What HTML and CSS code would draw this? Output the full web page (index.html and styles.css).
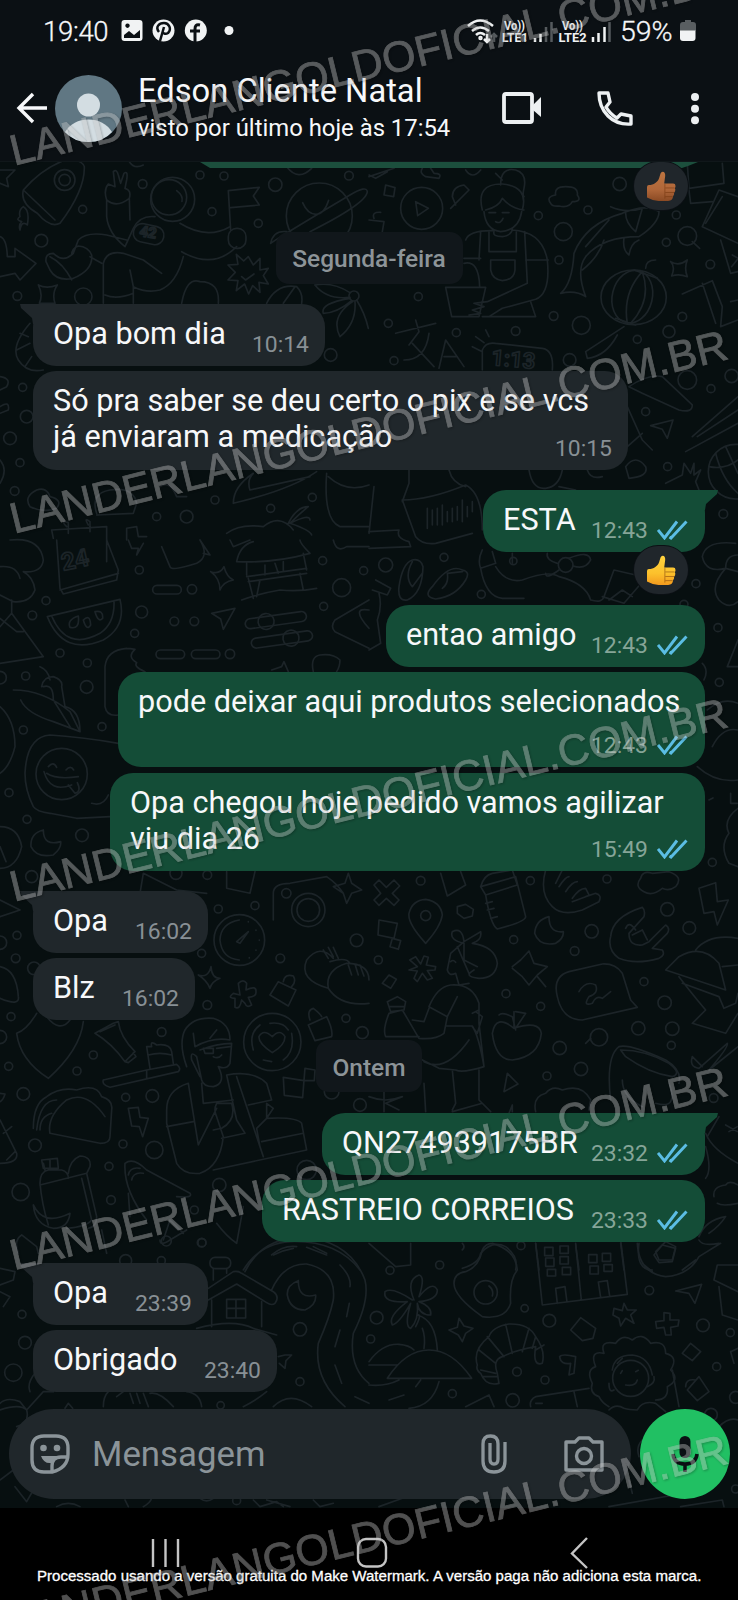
FILE: index.html
```html
<!DOCTYPE html>
<html lang="pt-BR">
<head>
<meta charset="utf-8">
<title>Edson Cliente Natal</title>
<link rel="stylesheet" href="styles.css">
</head>
<body>
<svg class="defs" width="0" height="0">
  <defs>
    <linearGradient id="yellow" x2="0" y2="1"><stop offset="0" stop-color="#ffd33f"/><stop offset=".6" stop-color="#fcc12c"/><stop offset="1" stop-color="#f39a1e"/></linearGradient>
    <linearGradient id="brown" x2="0" y2="1"><stop offset="0" stop-color="#bd7440"/><stop offset=".6" stop-color="#b0673a"/><stop offset="1" stop-color="#8b4a24"/></linearGradient>
    <symbol id="ticks" viewBox="0 0 31 20"><path d="M1 10l6.500 8L20 1.500M12.500 17l1.500 1L29.500 1.500" fill="none" stroke="#5bbde4" stroke-width="2.900"/></symbol>
    <symbol id="thumb" viewBox="0 0 30 31"><path d="M0 16Q0 14 2 14C7 14 11 11 12.500 7L14 2Q15-.5 17.500.5Q19.500 2 18.500 7L17.800 12.500H27Q29.500 12.500 29.500 15Q29.500 16.500 28.800 17.200Q29.800 18.500 29 20.500Q28.800 21.500 28 22Q28.500 24 27 25.500Q26.500 30 22 30.500H12Q5 30 0 27Z"/><path d="M19 17h9.500M19 21.700h9M19 26h7.500M18.500 13v15" fill="none" stroke="#6b2f08" stroke-opacity=".5" stroke-width="1"/></symbol>
  </defs>
</svg>
<div class="phone">
  <header class="top">
    <div class="status">
      <span class="clock">19:40</span>
      <svg class="notif" width="120" height="24" viewBox="0 0 120 24" fill="#f1f3f4">
        <path fill-rule="evenodd" d="M3.500 1h15a3 3 0 0 1 3 3v15a3 3 0 0 1-3 3h-15a3 3 0 0 1-3-3V4a3 3 0 0 1 3-3zM3 19v-3l5-4 5 4 6-5v8z M6.500 4.500a2.200 2.200 0 1 0 .01 0z"/>
        <circle cx="42.500" cy="11.500" r="11"/><path d="M38 13c-4-5 0-9 5-9s8 6 4 10c-3 2-5 0-5-1M43 8l-4 14" fill="none" stroke="#0b1014" stroke-width="2.500"/>
        <circle cx="74.800" cy="11.500" r="11"/><path d="M79 6c-4-1-5 1-5 4v13M69 12h10" fill="none" stroke="#0b1014" stroke-width="3"/>
        <circle cx="108" cy="11.500" r="4.500"/>
      </svg>
      <svg class="signals" width="150" height="28" viewBox="0 0 150 28" fill="none" stroke="#f1f3f4" stroke-width="2.500">
        <path d="M1 9Q13-2 26 9M5 14q8-7 17 0M9 18q4-4 9 0"/><circle cx="13.500" cy="21" r="1" /><path d="M20 17v8m-3-3l3 3 3-3"/><path d="M27 25v-8m-3 3l3-3 3 3" stroke="#555a5d"/>
        <g class="lte" stroke="none" fill="#f1f3f4"><text x="37" y="12.500" textLength="21" lengthAdjust="spacingAndGlyphs">Vo))</text><text x="35" y="25" textLength="26" lengthAdjust="spacingAndGlyphs">LTE1</text><text x="95" y="12.500" textLength="21" lengthAdjust="spacingAndGlyphs">Vo))</text><text x="91.500" y="25" textLength="28" lengthAdjust="spacingAndGlyphs">LTE2</text></g>
        <path d="M68 25v-4M73.500 25v-8M126 25v-5M131.500 25v-9M137.500 25V10"/><path d="M79 25V10M84.500 25V5M142.500 25V5" stroke="#555a5d"/>
      </svg>
      <span class="percent">59%</span>
      <svg class="battery" width="16" height="22" viewBox="0 0 16 22"><path d="M5 0h6v2h2q3 0 3 3v6H0V5q0-3 3-3h2z" fill="#595e61"/><path d="M0 10.500h15.500V18q0 3-3 3H3q-3 0-3-3z" fill="#f1f3f4"/></svg>
    </div>
    <div class="bar">
      <svg class="back" width="32" height="32" viewBox="0 0 32 32" fill="none" stroke="#f7f8fa" stroke-width="3.400"><path d="M31 16H3M17 2L3 16l14 14"/></svg>
      <svg class="avatar" width="67" height="67" viewBox="0 0 67 67"><circle cx="33.500" cy="33.500" r="33.500" fill="#607783"/><circle cx="33.500" cy="30" r="11.500" fill="#d3dde2"/><path d="M10 57q8-12.500 23.500-12.500T57 57Q48 67 33.500 67T10 57z" fill="#d3dde2"/></svg>
      <div class="who"><div class="name">Edson Cliente Natal</div><div class="seen">visto por último hoje às 17:54</div></div>
      <svg class="video" width="40" height="32" viewBox="0 0 40 32"><rect x="2" y="2" width="28" height="28" rx="2" fill="none" stroke="#edf0f2" stroke-width="3.800"/><path d="M31 13l8-8v20l-8-7z" fill="#edf0f2"/></svg>
      <svg class="call" width="36" height="36" viewBox="0 0 36 36" fill="none" stroke="#edf0f2" stroke-width="3.400" stroke-linejoin="round"><path d="M2 2h9l2 9-4 5q4 7 11 11l4-4 10 2v8Q20 34 11 25T2 2z"/></svg>
      <svg class="more" width="8" height="32" viewBox="0 0 8 32" fill="#edf0f2"><circle cx="4" cy="4" r="4"/><circle cx="4" cy="15.700" r="4"/><circle cx="4" cy="27.300" r="4"/></svg>
    </div>
  </header>

  <main class="chat">
    <svg class="doodles" width="738" height="1346" viewBox="0 162 738 1346">
      <!-- rocket, astronaut, planet -->
      <g transform="translate(0 160) scale(.3333)">
        <path d="M70 90Q130 20 210-5Q250 5 253 20Q255 90 180 190Q150 205 112 160Q60 130 70 90L165 180M70 140Q90 150 82 195Q65 180 60 210Q55 195 65 185Q45 180 60 170Q55 150 70 140"/>
        <circle cx="194" cy="60" r="31"/><circle cx="194" cy="60" r="17"/>
        <circle cx="518" cy="118" r="66"/><circle cx="507" cy="112" r="53"/><path d="M530 92q20 15 16 32"/>
        <path d="M320 120Q310 90 325 72L345 80L340 35Q350 25 355 45L362 70L372 40Q385 30 380 60L375 85Q395 90 388 115Q350 145 320 120V170Q325 220 375 260L400 205Q420 165 465 170M388 115L390 180M380 240L320 225Q260 215 235 240L220 280M540 190Q620 240 690 200M545 275Q640 330 710 260M550 290Q530 370 480 390Q440 400 400 380L390 330M310 430V310Q320 270 370 280L430 300L485 340M400 430V380M315 405Q350 420 400 400M220 280Q190 310 160 280Q135 280 138 305L150 330Q170 365 220 355Q280 330 275 285Q265 260 235 258Q215 265 215 285M150 290Q190 310 215 360M270 290L305 310"/>
        <rect x="400" y="195" width="92" height="55" rx="26" transform="rotate(12 446 222)"/><text x="418" y="232" font-size="44" transform="rotate(10 446 222)">42</text>
        <path d="M692 210L685 92L778 82L760 108L778 135L692 143"/><rect x="685" y="205" width="53" height="60" rx="25"/>
        <circle cx="958" cy="168" r="99"/><path d="M908 128q15 35 40 35t38-42M812 250Q840 230 1050 105Q1100 75 1102 95Q1100 130 930 215M812 250Q820 210 860 215"/>
        <path d="M745 290l15 25 20-20 0 35 25-5-15 22 15 25-28-5 3 30-22-20-12 25-12-30-25 20 5-30-30-2 22-23-22-22 30-2-5-30 22 20zM725 350l12 10 25-18"/>
        <path d="M0 30L45 30L20 55L25 80L0 70M0 230Q20 235 22 290H45V265L108 310L60 360L45 340L0 350M115 375Q140 388 172 375Q155 400 165 430H118Q130 405 115 375M545 430Q560 350 600 365Q660 365 655 430M800 430Q830 370 890 380Q910 400 905 430M850 430L885 380M90 490Q30 560 55 600Q80 640 130 630M60 520L85 530M50 570L90 550M75 620L95 590"/>
        <circle cx="1062" cy="408" r="15"/><path d="M945 375Q1000 365 1050 398M945 375Q980 420 1050 412M970 460Q960 430 1050 415M970 460Q1010 460 1055 422M1020 530Q990 470 1058 425M1020 530Q1070 490 1065 425M1105 505Q1095 460 1070 420M700 1030Q700 980 760 940Q740 960 750 990L930 950M700 1030Q870 990 950 935M980 940Q970 1080 1020 1100H1107M985 950Q1040 1000 1107 975M680 1120Q720 1090 790 1100Q840 1060 880 1110M865 1090Q890 1040 925 1040Q900 1060 870 1090M870 1090Q930 1060 930 1080M870 1090Q930 1110 935 1125M90 1040Q70 1010 110 990Q140 980 150 1010Q190 1020 170 1045Q130 1060 90 1040M290 1060Q270 1000 330 990Q400 980 410 1030L400 1060L290 1065M160 1135L155 1110L320 1100L320 1140M200 1100Q180 1080 205 1088V1120M265 1095Q250 1070 270 1085V1115M380 1140L380 1105L410 1100L415 1130L440 1130M480 980Q510 960 530 1010L560 1010M0 650Q35 655 20 680L0 690M0 740Q30 720 25 750L0 760M0 900Q25 930 0 970"/>
        <circle cx="124" cy="242" r="19"/><circle cx="250" cy="410" r="26"/><circle cx="248" cy="148" r="12"/><circle cx="428" cy="72" r="13"/><circle cx="600" cy="45" r="12"/><circle cx="672" cy="48" r="12"/><circle cx="636" cy="155" r="12"/><circle cx="775" cy="190" r="12"/><circle cx="826" cy="74" r="20"/><circle cx="1047" cy="47" r="13"/><circle cx="52" cy="408" r="13"/><circle cx="68" cy="682" r="12"/><circle cx="80" cy="770" r="19"/><circle cx="30" cy="835" r="19"/><circle cx="60" cy="908" r="12"/><circle cx="44" cy="993" r="13"/><circle cx="470" cy="1070" r="12"/><circle cx="560" cy="1070" r="19"/><circle cx="645" cy="1020" r="12"/><circle cx="812" cy="1045" r="12"/><circle cx="937" cy="1012" r="12"/><circle cx="992" cy="585" r="19"/><path d="M860 20Q895 65 935 25M385 0Q400 30 430 15"/>
      </g>
      <!-- gardener, koi, lantern -->
      <g transform="translate(369 160) scale(.3333)">
        <circle cx="158" cy="145" r="63"/><path d="M140 125l38 20-32 22zM340 150Q320 70 400 72Q480 80 460 150M350 150Q390 140 400 115Q425 145 465 150M345 155Q350 210 395 215Q450 210 458 155M360 158h20M400 158h20M380 185q15 8 22-10M395 75Q395 20 440 30Q475 40 465 85Q460 105 465 110M380 40L400 60M375 215Q370 230 400 230Q430 225 430 205M290 240Q300 210 375 212M430 210Q520 215 535 300Q545 400 500 418L400 445L360 470M335 215L330 300M285 295H335M285 310Q330 300 332 380M360 215V275H442V215M467 215L475 370L355 425L315 430L345 440L310 450L335 460L300 465M365 300H438V330Q435 360 400 362Q370 358 365 330ZM470 300H538M230 382H350L330 470H248ZM340 470H500L485 425M0 50L75 25M0 45L20 55L55 35M160 25Q150 40 170 50L210 55Q220 40 195 40L185 25M290 30Q310 60 335 30M245 145L300 90L285 75Q250 80 250 110L260 135M45 105l5-30 28 8-4 27zM0 180L45 185L40 215M15 175q-8-20 20-18"/>
        <path d="M545 130Q530 110 560 105Q555 80 590 80Q630 80 625 105Q640 125 610 125Q600 145 570 138Q550 140 545 130M575 400Q610 370 615 280Q650 190 760 160Q830 130 870 155Q870 190 810 230Q700 230 650 290Q620 330 650 410Q620 390 575 400M725 140Q770 160 820 145L800 215Q770 190 770 160M640 330Q690 290 705 240M650 260L720 180M765 235Q760 270 780 285Q785 250 810 240"/>
        <ellipse cx="794" cy="412" rx="98" ry="82"/><ellipse cx="790" cy="410" rx="60" ry="80" transform="rotate(14 790 410)"/><path d="M820 335Q760 400 775 490M820 335Q850 420 785 490M795 330L865 355M830 325Q830 300 860 300M740 475L800 495M765 500L650 575L655 595Q710 590 745 525M905 305Q930 320 955 300Q945 325 955 350Q930 340 908 348Q920 320 905 305M940 402L1030 362L1060 440L1055 500L1107 480M1000 370L1040 490M1085 425L1107 420M80 520L200 490M140 480L150 515L120 555M105 600Q170 600 180 520M130 550L195 620M210 625L230 540L285 620M225 590L265 590M340 630L340 570Q350 545 380 550L520 565Q555 570 550 630M310 560L340 575M350 510L360 530M320 530L345 548"/>
        <text x="365" y="615" font-size="66" transform="rotate(5 365 615)">1:13</text>
        <circle cx="955" cy="228" r="28"/><path d="M970 245L992 265M1000 200L1050 90L1107 110M1000 200L1107 250M1010 190L1060 110M1055 240L1085 340L1107 335M1090 285l18 10-20 25M955 10L960 85L1065 70L1060 10M960 90L965 130L1030 125M780 680Q840 640 880 650L970 735Q970 760 930 750L820 700ZM845 797L912 780L895 835L880 808ZM970 830L1107 710M985 830L1107 750M950 875L1107 790M770 920Q800 880 830 920Q840 950 780 955ZM890 970L940 945L945 910L965 940L975 910L975 945L995 930L980 965L990 990M100 1020Q180 1020 290 975Q340 1000 340 1110M775 740L820 840L850 870M775 860L820 820M120 930V970L100 1025M0 1120L15 980M240 930Q250 970 290 980M480 930Q490 990 530 985Q570 980 580 930M655 930Q665 960 700 950M570 980L620 990"/>
        <path d="M175 1045v60M190 1050v45M205 1045v50M220 1035v60M235 1055v30M250 1045v40M265 1040v40M280 1020v65M295 1040v30M310 1025v30"/>
        <circle cx="1100" cy="935" r="82"/><path d="M1020 920Q1070 930 1107 900M1040 880Q1060 960 1107 1000M1070 860L1107 940"/>
        <circle cx="752" cy="72" r="20"/><circle cx="657" cy="150" r="12"/><circle cx="508" cy="167" r="12"/><circle cx="583" cy="215" r="27"/><circle cx="570" cy="300" r="12"/><circle cx="554" cy="468" r="13"/><circle cx="637" cy="496" r="27"/><circle cx="148" cy="410" r="12"/><circle cx="58" cy="490" r="12"/><circle cx="262" cy="518" r="12"/><circle cx="440" cy="513" r="13"/><circle cx="75" cy="602" r="12"/><circle cx="602" cy="600" r="19"/><circle cx="892" cy="247" r="12"/><circle cx="922" cy="165" r="12"/><circle cx="1024" cy="313" r="13"/><circle cx="940" cy="470" r="13"/><circle cx="900" cy="515" r="18"/><circle cx="805" cy="538" r="12"/><circle cx="830" cy="755" r="12"/><circle cx="955" cy="660" r="28"/><circle cx="1026" cy="686" r="12"/><circle cx="1088" cy="648" r="20"/><circle cx="896" cy="920" r="12"/><circle cx="1063" cy="1062" r="13"/>
      </g>
      <!-- sandals, flower -->
      <g transform="translate(369 480) scale(.3333)">
        <path d="M100 60L140 170Q160 195 200 190L310 160M0 155L90 150Q80 175 120 185L125 200L0 205M130 240Q100 250 90 320Q85 365 115 360Q160 340 162 260Q155 235 130 240M130 245Q105 290 130 320L160 280M280 270Q240 250 190 320Q160 350 200 357Q260 350 290 300Q305 275 280 270M280 275L235 280Q240 310 220 325M20 300L65 325L55 345L10 330M30 340Q40 380 25 420L35 490L0 510M340 210Q325 240 335 265L380 250L370 215M335 265Q350 350 400 355H465M380 260Q410 310 460 300Q540 270 570 290Q650 310 665 360Q700 370 705 350L735 270L800 285M700 350L765 370L825 300M720 360L760 330L790 350M430 220V250"/>
        <circle cx="590" cy="255" r="22"/><path d="M565 250Q530 240 535 220M600 235Q660 210 665 240Q650 270 612 258M570 270Q530 300 530 280"/>
        <circle cx="50" cy="255" r="21"/><circle cx="225" cy="232" r="12"/><circle cx="337" cy="343" r="12"/><circle cx="433" cy="243" r="11"/><circle cx="981" cy="311" r="12"/><path d="M1100 190Q1010 180 1000 230Q1010 280 1070 265Q1020 320 1050 360Q1080 390 1107 365M1107 225Q1070 225 1070 265L1107 275M1075 560L1107 480M1075 560H1107M1000 550Q1020 570 1005 600M985 860Q1040 910 1107 900M1030 800Q1060 740 1107 750M1015 690Q1060 650 1107 670M1020 960l12-6M1085 940v30h20M1107 985Q1060 1020 1080 1060Q1050 1100 1080 1150L1107 1160"/>
        <circle cx="1047" cy="443" r="12"/><circle cx="1051" cy="607" r="12"/><circle cx="1030" cy="1147" r="12"/><circle cx="945" cy="373" r="12"/>
      </g>
      <!-- calendar, watermelon, chillies, badge -->
      <g transform="translate(0 540) scale(.3333)">
        <path d="M170 0L180 145L190 162L350 120L355 90L320 0M180 150L355 100M320 0V65M30 0Q120-10 130 60Q125 100 70 95Q100 110 105 150Q90 190 40 185L0 165M60 115Q50 75 0 80M35 180V220L130 350L0 370M35 220L0 260M0 235L50 275H70M142 230L360 178Q380 260 310 300Q190 350 142 230M155 228Q200 335 300 280Q345 250 342 182M235 228Q200 240 210 262Q240 270 235 228M250 240Q270 220 272 255Q260 275 250 240M285 215Q310 210 308 235Q295 250 285 215M385 0L395 25H415L410 45L430 10M485 20L510 80Q515 95 590 70Q630 50 600 0M600 0L630 45L610 40M690 0L700 20L750 0M632 95Q660 105 672 80Q680 110 700 120Q670 125 660 150Q660 115 632 95M710 65Q720 15 760 5M710 65Q820 70 930 40Q900 10 900 0M740 70V105M740 110L920 85M745 125L920 100M745 115L760 175M780 120L770 170M900 100L910 150M725 180Q780 160 840 150Q900 155 950 145M795 75V105M825 70L835 100M850 65V95M910 40L920 90M40 450Q130 450 210 515L240 575L160 545Q80 520 62 480M125 440Q130 410 160 410Q190 420 185 440L195 500Q240 510 240 575M130 440Q160 430 160 480L210 560M120 380Q145 390 150 420M380 325Q390 325 405 328Q380 350 410 368Q400 380 435 395M380 325Q320 330 315 380V500Q320 530 355 525M355 610Q240 590 150 585Q80 590 75 700Q75 750 100 800Q110 815 150 820L230 835L330 830M275 790Q310 800 325 765"/>
        <text x="190" y="92" font-size="72" transform="rotate(-12 190 92)">24</text>
        <circle cx="185" cy="702" r="77"/><path d="M132 695Q150 760 215 735M145 680q15-18 25 2M198 690q14-16 23 0M205 735L225 760Q245 755 232 728M140 700Q170 720 235 710"/>
        <rect x="458" y="136" width="86" height="26" rx="13"/><circle cx="576" cy="148" r="14"/><rect x="468" y="330" width="86" height="26" rx="13"/><rect x="574" y="330" width="86" height="26" rx="13"/><circle cx="690" cy="342" r="14"/><g transform="rotate(-8 830 240)"><rect x="735" y="225" width="185" height="30" rx="15"/><circle cx="798" cy="240" r="24"/><rect x="745" y="285" width="185" height="30" rx="15"/><circle cx="865" cy="300" r="24"/></g>
        <path d="M635 220L705 205L670 268L662 237ZM1107 180L1005 240Q990 260 1005 275L1107 325M1107 210Q1050 200 1107 265M815 390L845 380L852 365L865 395M940 395Q930 350 960 345Q1000 340 1020 360Q1020 380 1010 395M1000 0Q1010 40 1040 20L1107 20M0 500Q45 540 45 620Q30 680 0 700M0 500M0 860Q55 860 65 920Q50 985 0 985M0 920L18 965M130 870Q90 880 93 920Q110 955 160 945Q185 925 182 905Q130 920 130 870M420 1060L430 1000L530 1050L620 1060M680 995V1045L750 1060L765 995M820 1140V1060Q820 1030 870 1030L980 1010Q1010 1030 1030 1060M1000 1040L1035 1030L1045 1000L1055 1030L1085 1050L1055 1060L1040 1090L1030 1060ZM60 1110L0 1130M0 1080L60 1110"/>
        <circle cx="925" cy="1110" r="50"/><circle cx="925" cy="1110" r="34"/><circle cx="859" cy="1060" r="14"/><circle cx="418" cy="90" r="12"/><circle cx="138" cy="182" r="12"/><circle cx="97" cy="226" r="13"/><circle cx="425" cy="216" r="18"/><circle cx="523" cy="244" r="13"/><circle cx="583" cy="244" r="13"/><circle cx="404" cy="280" r="12"/><circle cx="180" cy="339" r="12"/><circle cx="262" cy="369" r="12"/><circle cx="260" cy="441" r="19"/><circle cx="77" cy="408" r="12"/><circle cx="0" cy="413" r="19"/><circle cx="306" cy="560" r="12"/><circle cx="70" cy="570" r="12"/><circle cx="27" cy="758" r="12"/><circle cx="81" cy="838" r="12"/><circle cx="246" cy="886" r="19"/><circle cx="95" cy="1010" r="18"/><circle cx="968" cy="62" r="12"/><circle cx="1025" cy="143" r="27"/><circle cx="971" cy="199" r="12"/><circle cx="1091" cy="92" r="12"/><circle cx="655" cy="1107" r="12"/><circle cx="765" cy="1097" r="12"/><circle cx="622" cy="1005" r="13"/><circle cx="528" cy="1000" r="18"/>
      </g>
      <!-- compass, skater, taco, grocery bag -->
      <g transform="translate(0 870) scale(.3333)">
        <circle cx="718" cy="210" r="76"/><path d="M718 270Q665 265 660 210Q662 160 718 150M710 215L745 185L720 220ZM745 155v1M768 180v1M778 210v1M768 240v1M748 263v1"/>
        <path d="M1000 265Q960 220 920 270Q895 330 985 355M990 275Q1040 260 1050 280M985 355Q975 300 1040 280Q1107 280 1107 330M985 355Q1020 410 1107 400M970 240L985 265M985 232L1000 260M1000 232L1015 265M1045 285L1055 315M1065 282L1075 315M1080 285L1092 318"/>
        <path d="M595 315Q625 325 633 290Q635 325 660 325Q635 335 630 355Q620 330 595 315M700 370L720 375L715 340Q730 325 740 340L738 360Q770 345 768 365Q770 380 745 382L755 405Q740 415 735 400L725 390Q720 420 705 412V385Q680 385 700 370M810 375L835 335L888 360L865 408ZM850 335Q855 310 880 318Q890 335 875 350M925 465L980 440Q1000 480 995 500L945 512ZM930 450Q920 420 940 415Q960 430 965 440"/>
        <circle cx="817" cy="516" r="86"/><path d="M817 548Q775 520 777 500Q790 475 817 500Q840 475 855 500Q855 525 817 548M760 540Q745 490 780 465M875 490Q885 545 850 570M790 570L815 575M810 460Q850 455 865 480"/>
        <path d="M560 590Q535 520 555 480Q580 440 640 445Q690 460 690 510Q640 500 585 530L580 490M650 480L630 505M600 540Q650 520 695 520L690 580Q680 600 655 590Q680 640 640 650Q610 650 605 630L590 560Q570 540 575 570L600 620M610 535H640L640 550H615ZM650 535L690 530M640 560q15 8 25-5M565 640Q500 660 500 720V760L530 880Q550 915 600 910Q660 890 670 800L650 740Q640 720 650 700H695Q710 750 665 775L640 780M500 770L580 755M565 640L595 825L650 715M605 640L610 700L700 690M680 615L710 750L735 790L665 805M680 615Q760 600 800 640L815 690L745 705M710 620L790 860M640 900L920 840L905 760Q890 740 800 745L820 715L800 700V745L770 775L780 830M785 815L910 790M640 550"/>
        <path d="M50 490Q80 480 110 430M50 490Q60 570 145 625Q240 540 250 455M140 440Q180 490 210 450M285 490L340 460L355 455Q360 500 405 545L375 575Q335 520 285 490M300 485L345 465M375 575L385 578L408 560L400 548M310 630L440 600L530 583Q545 595 535 605L330 652Q305 645 310 630M440 600V625M450 595L440 530H455Q450 510 470 525Q510 520 515 545L520 580M445 555Q480 545 515 555M0 290Q50 300 55 380Q60 410 0 385M0 670L15 672Q10 690 0 695M100 775Q100 700 140 680Q180 650 230 660Q290 640 305 680Q340 690 335 720L330 800Q330 820 300 820L150 790Q140 740 200 690Q260 660 315 740M110 780Q120 690 170 690M120 780Q120 740 155 730M385 715L415 712L420 742L445 745L428 800L418 770L395 768ZM0 750L50 850Q55 880 0 880M10 790L35 770M20 870L45 845"/>
        <path d="M145 1065Q125 1000 120 940Q120 905 145 900H185Q205 905 205 925M135 900L130 880M125 870L130 895H175L172 865ZM150 868V895M120 945L260 910L270 890Q275 860 240 858Q210 870 205 910M245 925L275 1050Q260 1070 200 1075M260 910L290 1040Q290 1070 265 1075M100 1005Q130 1070 210 1030Q205 1075 160 1075Q105 1065 100 1005M375 880Q400 860 440 900L570 970Q580 985 530 980M375 880Q370 960 440 1050M385 915Q390 890 420 895M395 930Q400 905 430 910M385 970L390 1040M490 1110L510 1050L550 1090M480 1110Q480 1130 510 1110L560 1080M650 1060Q680 1100 710 1120L730 1010M55 1150Q40 1110 65 1095L110 1130L115 1150M305 1080L320 1150M730 1200Q780 1120 870 1115Q1010 1110 1080 1200M815 1155Q850 1125 890 1130M940 1130L980 1150"/>
        <path d="M850 622L912 632L908 683L853 676ZM912 632L915 595L945 600L943 632Z"/>
        <circle cx="841" cy="265" r="13"/><circle cx="1070" cy="211" r="19"/><circle cx="1038" cy="445" r="12"/><circle cx="1087" cy="488" r="18"/><circle cx="605" cy="250" r="12"/><circle cx="622" cy="405" r="13"/><circle cx="47" cy="265" r="13"/><circle cx="102" cy="295" r="19"/><circle cx="51" cy="196" r="12"/><circle cx="0" cy="218" r="20"/><circle cx="33" cy="440" r="12"/><circle cx="0" cy="501" r="20"/><circle cx="26" cy="589" r="12"/><circle cx="231" cy="603" r="12"/><circle cx="280" cy="555" r="12"/><circle cx="485" cy="486" r="13"/><circle cx="70" cy="672" r="19"/><circle cx="377" cy="682" r="12"/><circle cx="457" cy="678" r="19"/><circle cx="105" cy="826" r="19"/><circle cx="369" cy="822" r="12"/><circle cx="463" cy="840" r="26"/><circle cx="327" cy="889" r="12"/><circle cx="62" cy="966" r="26"/><circle cx="333" cy="990" r="13"/><circle cx="658" cy="945" r="20"/><circle cx="583" cy="1020" r="12"/><circle cx="605" cy="1118" r="13"/><circle cx="920" cy="900" r="29"/><circle cx="995" cy="665" r="22"/><circle cx="1080" cy="705" r="19"/>
      </g>
      <!-- bottle, pin, reader, apple, cup -->
      <g transform="translate(369 870) scale(.3333)">
        <path d="M15 45L30 30L52 52L75 30L92 48L70 70L90 90L75 106L52 85L30 106L15 90L35 70ZM170 220Q115 160 120 130Q130 90 170 88Q215 95 220 135Q215 170 170 220M30 150L85 160L75 205L27 195ZM70 205L95 212L88 238L63 230ZM215 10L235 78L290 45L275 5M265 110L290 103L313 118L310 138L285 145L265 130ZM335 50L440 20L470 140Q470 155 385 177Q365 165 350 75M335 50Q345 15 370 10L430 0L445 45L350 75ZM350 100L370 95M355 120L375 115M365 145L385 140M530 0Q510 70 550 110Q580 140 640 120L690 95Q700 75 680 70L650 80L610 95M560 40L580 0M570 50Q590 20 600 20M590 65Q610 35 625 35M610 85Q630 55 650 55L660 75M825 65Q795 50 815 25Q820 0 850 10L900 5Q945 20 920 50Q900 65 880 55Q850 80 825 65M990 55L1040 38L1045 95L1078 90L1045 165L1035 125L1005 130ZM540 140Q500 150 497 190Q510 230 560 220Q585 205 583 185Q540 190 540 140M820 112Q830 120 825 140L780 190Q780 230 820 225L840 215L890 165Q905 175 895 190L850 235L880 240Q890 255 870 265Q800 285 750 265Q715 240 725 200Q730 140 820 112M770 175Q780 150 800 180M790 195L820 180L835 210"/>
        <path d="M430 290L455 270L480 243L495 280L535 290L505 315L480 345L460 320L430 295M505 320L530 350M120 300L145 290L122 270L140 260L155 282L165 258L178 262L172 285L200 290L198 300L175 302L190 325L175 330L160 310L145 335L135 325L145 303ZM40 340L60 315L82 328L65 355ZM250 185Q280 170 285 215L335 185Q340 210 310 220Q380 230 385 280Q380 325 330 325Q280 320 315 300M285 215L245 250L235 300Q240 320 260 310L270 345L300 340M250 185Q240 210 285 220M285 220L285 270L325 290M265 230L300 310M245 275q8-8 15 2M180 410Q205 350 245 345Q310 340 330 400V460L345 590Q280 610 260 600L210 595L160 570M180 410L235 440L265 380M235 440L225 490Q200 510 150 505L100 420L60 430Q40 480 50 500H150M180 415L165 455L130 450M55 395L85 380L110 395L105 420L65 425ZM60 410H105M230 468H310Q330 500 345 590M310 430L330 420M310 470L325 490L340 440L320 425M165 575Q230 610 300 510M250 600L260 700L250 720M330 600L330 690L365 725M250 725L340 700M165 640L170 725M0 680Q50 700 100 680L50 700L90 720M45 640V725M435 475Q380 430 370 490Q380 570 430 570Q510 560 517 490Q510 450 435 475V425M390 435Q400 425 430 440L440 480M440 425L470 430L440 475"/>
        <path d="M565 380Q550 320 600 305L700 282Q740 280 760 310L785 390L805 412L640 450Q580 450 565 380M630 365Q650 330 680 345Q690 370 660 380Q640 410 670 400Q680 375 700 385L725 365M890 300L930 260Q1000 220 1050 280L1070 360L1010 340ZM930 320Q960 360 1010 420L970 460L1070 490L1107 430M940 340L1050 380L1065 415L1100 400L1107 370M980 240Q1020 190 1107 205M1060 290L1107 285M755 540Q830 540 900 580Q940 610 910 620Q840 610 770 560Z"/>
        <path d="M725 690Q710 560 750 530Q780 520 890 570Q940 600 930 640M760 630Q760 680 820 710M860 700Q930 720 900 640M970 560Q960 590 990 595L1075 520Q1080 530 1020 600L1107 530M970 560L1000 590M405 665L415 610L447 642ZM500 725Q490 680 530 670Q550 645 580 660Q640 640 665 690L660 720M420 730L430 705V725M650 520L665 505M1010 790Q1030 840 1107 880M1050 740L1015 800M1070 765l35 20M1080 785l25-15M1010 830Q1030 900 1010 925M1035 980Q1030 950 1070 945Q1080 930 1107 945M1045 1000Q1060 1010 1107 1000M990 1100Q1010 1050 1070 1040Q1050 1070 1020 1090M0 1120L80 1190L125 1185V1120M280 1120Q290 1130 280 1140M280 1195Q330 1180 335 1150Q370 1110 410 1130Q450 1160 440 1200M500 1120L510 1200M620 1125L630 1200M755 1120L765 1200M810 1120Q800 1200 850 1200M860 1145L890 1115L920 1130L910 1170L870 1170Z"/>
        <circle cx="170" cy="137" r="15"/><circle cx="690" cy="502" r="26"/><circle cx="155" cy="32" r="13"/><circle cx="484" cy="32" r="12"/><circle cx="714" cy="27" r="12"/><circle cx="895" cy="118" r="20"/><circle cx="961" cy="174" r="19"/><circle cx="668" cy="184" r="20"/><circle cx="617" cy="243" r="13"/><circle cx="434" cy="209" r="12"/><circle cx="28" cy="270" r="12"/><circle cx="411" cy="371" r="12"/><circle cx="515" cy="409" r="12"/><circle cx="825" cy="335" r="12"/><circle cx="887" cy="398" r="20"/><circle cx="808" cy="475" r="20"/><circle cx="910" cy="476" r="20"/><circle cx="907" cy="526" r="12"/><circle cx="572" cy="534" r="20"/><circle cx="636" cy="597" r="20"/><circle cx="534" cy="618" r="12"/><circle cx="1034" cy="684" r="13"/>
      </g>
      <!-- house, road, palm, egg, croissant, portrait -->
      <g transform="translate(0 1240) scale(.3333)">
        <rect x="630" y="52" width="62" height="34" rx="15"/><path d="M640 86V120M680 86V100M625 145L700 95Q715 92 725 100L820 155Q840 170 825 190Q815 198 800 188L710 132L625 180M635 180V260M785 185V260M680 178H737V234H680ZM708 178V234M680 205H737M590 265Q700 235 760 265L830 285M735 95Q780 0 900-10Q1050 0 1095 120Q1110 180 1060 280Q1045 380 1107 430M815 150Q850 70 920 72Q1010 90 1000 180Q990 230 955 310Q940 420 1035 500M820 45Q850 30 880 25M920 22L980 45M1020 75Q1055 110 1050 140M1048 190L1040 230M1020 270L1005 320M1005 375L1025 430M1065 470L1107 490M895 122Q860 135 862 165Q870 210 915 210Q950 195 947 165Q895 180 895 122M835 350L855 345L875 345L858 362L855 385L838 370M90 455Q80 430 105 400M0 510Q60 490 80 510L130 455H160M0 490Q20 470 60 485L80 510Q90 550 50 560M310 500Q310 470 325 455M370 455L350 470M390 460L400 490M410 460L420 490M430 460L445 500M450 460Q480 455 520 500M560 455Q600 460 605 500M195 505L205 490L218 505M730 500Q770 480 800 455M820 500Q870 450 935 500M0 720L40 690M45 740L80 785L100 750M375 780L385 800M430 800Q450 790 455 775M600 775Q620 790 640 775M760 780L780 800L830 785L850 800M800 780L870 800M170 800Q205 780 240 800M940 780L960 800L1000 790M0 85L45 95L40 120L0 135M0 155L30 170L10 200"/>
        <circle cx="66" cy="223" r="12"/><circle cx="75" cy="308" r="19"/><circle cx="40" cy="398" r="26"/><circle cx="900" cy="268" r="20"/><circle cx="900" cy="425" r="12"/><circle cx="662" cy="496" r="11"/><circle cx="606" cy="8" r="12"/><circle cx="499" cy="3" r="15"/><circle cx="377" cy="62" r="18"/><circle cx="484" cy="62" r="12"/><circle cx="710" cy="782" r="12"/>
      </g>
      <g transform="translate(369 1240) scale(.3333)">
        <path d="M135 180Q110 120 150 105Q170 110 150 170Q190 120 205 150Q205 180 150 185Q190 200 185 225Q150 225 145 190Q150 240 125 265Q105 260 125 190Q90 250 70 255Q55 230 115 185Q40 190 48 155Q70 140 130 180M140 260Q160 220 145 225Q200 240 205 330M160 265Q170 290 165 325M55 415Q110 330 180 330Q250 330 308 415ZM0 375H85M0 365Q40 310 90 313Q120 315 135 330M0 435Q50 440 90 420M60 480L105 465M140 440L155 420M120 505Q190 500 210 425M240 270L265 262L270 235L285 258L312 265L290 280L280 305L268 285Z"/>
        <path d="M370 10Q440 30 445 90Q420 120 425 190Q410 240 340 230Q255 170 255 130Q255 100 290 95Q330 80 340 30Q350 10 370 10"/><circle cx="350" cy="157" r="35"/><path d="M360 138q15 12 10 30M500 10L520 195L775 163L755 0M620 10L637 180M565 190L560 145L588 140L594 186M695 172L688 126L715 122L722 168"/>
        <path d="M527 22h25v25h-25zM530 54h25v25h-25zM535 88h25v20h-25zM573 18h25v22h-25zM573 50h25v22h-25zM580 82h25v22h-25zM659 44h25v24h-25zM663 78h25v24h-25zM700 40h25v24h-25zM705 74h25v20h-25z"/>
        <path d="M805 10Q810 100 890 110Q960 105 990 50L1055 10M990 0Q1000 20 1050 10M855 45L880 15L920 25L910 65L870 68ZM820 70L850 95M940 90L980 60M920 153L998 133L978 190L960 160ZM1045 75L1107 75M1045 75L1035 120L1107 155M1050 140L1060 225L1107 240M605 270L635 233L680 265L672 295L640 302ZM735 205L760 212L765 190L775 210L802 210L785 225L795 250L770 235L755 258L750 235L732 225ZM860 245L885 242L885 218L903 220L903 240L930 240L927 258L905 262L907 285H890L885 262L863 265ZM940 340L965 310L995 335L970 362ZM1085 335L1107 325M1085 335L1095 370M955 450L990 410L1020 455L985 482ZM950 440Q950 415 980 420"/>
        <path d="M325 375Q310 330 360 290Q370 260 420 252Q480 250 500 290Q530 330 520 370Q490 380 500 320Q440 330 400 350Q370 360 385 400L390 430Q350 440 335 400Q320 390 325 375M330 330L380 370M355 290L405 350M410 253L430 340M480 265L460 335M500 290L490 325M500 330L525 315M335 390L380 400M340 410L385 410M572 350Q575 375 605 370L600 405L615 400L620 350Q580 340 572 350M290 500L360 465L375 500M485 500Q480 480 500 470L660 445M615 455L625 500M500 490L520 490M720 510Q740 490 765 505Q780 510 805 510Q820 480 860 490L890 515M910 390L930 500"/>
        <circle cx="785" cy="415" r="54"/><path d="M730 390Q735 345 790 345Q840 350 850 405M735 450Q720 460 720 430M835 440Q860 430 855 410M690 470Q660 460 670 430Q650 390 680 380Q660 330 705 340Q690 300 740 310Q760 280 790 300Q820 275 845 310Q890 300 890 340Q930 350 905 390Q935 420 895 440Q900 480 860 480M690 470Q700 490 720 500M770 435Q800 440 805 420M755 400l5-8M800 395l8-4M745 370L760 355"/>
        <circle cx="212" cy="75" r="12"/><circle cx="63" cy="91" r="12"/><circle cx="456" cy="17" r="12"/><circle cx="467" cy="205" r="11"/><circle cx="541" cy="242" r="19"/><circle cx="23" cy="233" r="19"/><circle cx="5" cy="297" r="12"/><circle cx="444" cy="395" r="13"/><circle cx="528" cy="420" r="12"/><circle cx="431" cy="481" r="20"/><circle cx="250" cy="461" r="12"/><circle cx="841" cy="151" r="13"/><circle cx="1002" cy="256" r="19"/><circle cx="1084" cy="278" r="12"/><circle cx="1043" cy="380" r="12"/><circle cx="1100" cy="472" r="18"/><circle cx="1026" cy="524" r="19"/><circle cx="1100" cy="747" r="12"/><path d="M720 800L1000 750M935 800L1060 780L1065 800M780 720L790 760M1050 560Q1080 530 1107 540M30 800L100 775M820 600Q800 620 810 650"/>
      </g>
    </svg>

    <div class="thread">
      <div class="row out"><div class="clipped"></div><span class="react r0"><svg width="29" height="31" fill="url(#brown)"><use href="#thumb"/></svg></span></div>
      <div class="chip c1"><span>Segunda-feira</span></div>
      <div class="row in m1"><div class="bubble tail"><p>Opa bom dia</p><time>10:14</time></div></div>
      <div class="row in m2"><div class="bubble"><p>Só pra saber se deu certo o pix e se vcs<br>já enviaram a medicação</p><time>10:15</time></div></div>
      <div class="row out m3"><div class="bubble tail"><p>ESTA</p><time>12:43<svg width="31" height="20"><use href="#ticks"/></svg></time></div><span class="react"><svg width="29" height="31" fill="url(#yellow)"><use href="#thumb"/></svg></span></div>
      <div class="row out m4"><div class="bubble"><p>entao amigo</p><time>12:43<svg width="31" height="20"><use href="#ticks"/></svg></time></div></div>
      <div class="row out m5"><div class="bubble"><p>pode deixar aqui produtos selecionados</p><time>12:43<svg width="31" height="20"><use href="#ticks"/></svg></time></div></div>
      <div class="row out m6"><div class="bubble"><p>Opa chegou hoje pedido vamos agilizar<br>viu dia 26</p><time>15:49<svg width="31" height="20"><use href="#ticks"/></svg></time></div></div>
      <div class="row in m7"><div class="bubble tail"><p>Opa</p><time>16:02</time></div></div>
      <div class="row in m8"><div class="bubble"><p>Blz</p><time>16:02</time></div></div>
      <div class="chip c2"><span>Ontem</span></div>
      <div class="row out m9"><div class="bubble tail"><p>QN274939175BR</p><time>23:32<svg width="31" height="20"><use href="#ticks"/></svg></time></div></div>
      <div class="row out m10"><div class="bubble"><p>RASTREIO CORREIOS</p><time>23:33<svg width="31" height="20"><use href="#ticks"/></svg></time></div></div>
      <div class="row in m11"><div class="bubble tail"><p>Opa</p><time>23:39</time></div></div>
      <div class="row in m12"><div class="bubble"><p>Obrigado</p><time>23:40</time></div></div>
      <div class="composer">
        <div class="field">
          <svg class="sticker" width="40" height="40" viewBox="0 0 40 40" fill="none" stroke="#8b9499" stroke-width="3.400"><path d="M38 20V14Q38 2 26 2H14Q2 2 2 14V26Q2 38 14 38H22Q38 34 38 20ZM22 38V32Q22 23 31 23H38"/><g fill="#8b9499" stroke="none"><circle cx="13.500" cy="14" r="3.300"/><circle cx="27" cy="14" r="3.300"/><path d="M11 22h17q-6 4-7 7q-7 1-10-7z"/></g></svg>
          <span class="hint">Mensagem</span>
          <svg class="clip" width="26" height="40" viewBox="0 0 26 40" fill="none" stroke="#8b9499" stroke-width="3.300"><path d="M24 8V27Q24 38 13 38T2 27V10Q2 2 9.500 2T17 10V25Q17 30 13 30T9 25V9"/></svg>
          <svg class="cam" width="40" height="36" viewBox="0 0 40 36" fill="none" stroke="#8b9499" stroke-width="3.400" stroke-linejoin="round"><path d="M2 6H11L15 2H25L29 6H38V34H2Z"/><circle cx="20" cy="20" r="7.500"/></svg>
        </div>
        <div class="mic"><svg width="28" height="37" viewBox="0 0 28 37"><rect x="8.500" y="0" width="11" height="22" rx="5.500" fill="#0b1014"/><path d="M2 18q1 10 12 10t12-10M14 28v8" fill="none" stroke="#0b1014" stroke-width="3.500"/></svg></div>
      </div>
    </div>
  </main>

  <nav class="nav">
    <svg class="keys" width="738" height="92" viewBox="0 0 738 92" fill="none" stroke="#c4c4c4" stroke-width="2.400"><path d="M153 31V59M165.500 31V59M178 31V59M587 30L572 45.500L587 60"/><rect x="358" y="31" width="28" height="27.500" rx="8"/></svg>
    <p class="credit">Processado usando a versão gratuita do Make Watermark. A versão paga não adiciona esta marca.</p>
  </nav>

  <svg class="watermark" width="738" height="1600" viewBox="0 0 738 1600">
    <g transform="translate(14 165.500) rotate(-13.730)"><text textLength="737">LANDERLANGOLDOFICIAL.COM.BR</text></g>
    <g transform="translate(14 533.500) rotate(-13.730)"><text textLength="737">LANDERLANGOLDOFICIAL.COM.BR</text></g>
    <g transform="translate(14 901.500) rotate(-13.730)"><text textLength="737">LANDERLANGOLDOFICIAL.COM.BR</text></g>
    <g transform="translate(14 1270) rotate(-13.730)"><text textLength="737">LANDERLANGOLDOFICIAL.COM.BR</text></g>
    <g transform="translate(14 1638) rotate(-13.730)"><text textLength="737">LANDERLANGOLDOFICIAL.COM.BR</text></g>
  </svg>
</div>
</body>
</html>
```
FILE: styles.css
```css
* { box-sizing: border-box; }
body { margin: 0; background: #000; font-family: Roboto, "Liberation Sans", sans-serif; color: #f7f8fa; }
p { margin: 0; }
svg { display: block; flex: none; }
.defs { position: absolute; }
.phone { position: relative; width: 738px; height: 1600px; overflow: hidden; display: flex; flex-direction: column; }

.top { height: 162px; background: #0b1014; border-bottom: 1px solid #10171a; }
.status { height: 62px; display: flex; align-items: flex-start; padding: 19px 0 0 43px; }
.clock { width: 78px; font-size: 27.500px; line-height: 25px; font-weight: 300; letter-spacing: -.3px; white-space: nowrap; -webkit-text-stroke: .3px; }
.signals { margin: -2px 0 0 226px; }
.lte text { font-size: 12.500px; font-weight: 700; }
.percent { margin-left: 3px; width: 58px; font-size: 28.500px; line-height: 25px; font-weight: 300; -webkit-text-stroke: .3px; }
.battery { margin: 1px 0 0 2px; }
.bar { height: 92px; display: flex; align-items: center; padding-left: 16px; }
.avatar { margin-left: 7px; }
.who { width: 340px; margin-left: 16px; padding-top: 1px; white-space: nowrap; }
.name { font-size: 32.700px; line-height: 38px; }
.seen { font-size: 23.850px; line-height: 36px; }
.video { margin-left: 24px; }
.call { margin-left: 55px; margin-top: 2px; }
.more { margin-left: 58px; margin-top: 2px; }

.chat { position: relative; height: 1346px; background: #070f10; overflow: hidden; }
.doodles { position: absolute; inset: 0; fill: none; stroke: #1c2428; stroke-width: 5; stroke-linecap: round; stroke-linejoin: round; }
.doodles text { font-weight: 700; }
.thread { position: relative; display: flex; flex-direction: column; }
.row { position: relative; display: flex; padding: 0 33px; }
.row.out { justify-content: flex-end; }
.clipped { width: 498px; height: 6px; margin-right: 7px; background: #1c4f3d; clip-path: polygon(0 0, 100% 0, 488px 4px, 482px 100%, 10px 100%); }
.bubble { position: relative; display: grid; height: 62px; padding: 12px 16px 7px 20px; border-radius: 23px; background: #20272b; }
.out .bubble { background: #144d37; padding-right: 17px; }
.bubble p, .bubble time { grid-area: 1 / 1; }
.bubble p { font-size: 30.600px; line-height: 36px; white-space: nowrap; }
.bubble time { align-self: end; justify-self: end; display: flex; gap: 9px; font-size: 22.900px; line-height: 28px; color: #889095; }
.bubble time svg { margin-top: 3px; }
.out .bubble time { color: #86a598; }
.tail::before { content: ""; position: absolute; top: 0; left: -13px; width: 36px; height: 20px; background: inherit; clip-path: polygon(0 0, 100% 0, 100% 100%, 13px 100%, 12px 14px, 1px 4px); }
.out .tail::before { left: auto; right: -13px; transform: scaleX(-1); }
.out .tail, .in .tail { z-index: 0; }
.react { position: absolute; right: 50px; top: 56px; width: 54px; height: 48px; display: grid; place-items: center; border-radius: 24px; background: #20262b; box-shadow: 0 0 0 1px #0b1014; z-index: 2; }
.r0 { top: 0; }
.chip { display: flex; justify-content: center; }
.chip span { display: flex; align-items: center; justify-content: center; height: 52px; border-radius: 13px; background: #11171b; color: #8d9498; font-size: 24.500px; font-weight: 500; }
.c1 { margin-top: 64px; }
.c1 span { width: 187px; }
.c2 { margin-top: 20px; }
.c2 span { width: 106px; padding-top: 2px; }
.m1 { margin-top: 20px; }
.m1 .bubble { width: 292px; }
.m2 { margin-top: 5px; }
.m2 .bubble { width: 595px; height: 99px; }
.m3 { margin-top: 20px; }
.m3 .bubble { width: 222px; }
.m4 { margin-top: 53px; }
.m4 .bubble { width: 319px; }
.m5 { margin-top: 5px; }
.m5 .bubble { width: 587px; height: 95px; }
.m6 { margin-top: 6px; }
.m6 .bubble { width: 595px; height: 98px; }
.m7 { margin-top: 20px; }
.m7 .bubble { width: 175px; }
.m8 { margin-top: 5px; }
.m8 .bubble { width: 162px; }
.m9 { margin-top: 21px; }
.m9 .bubble { width: 383px; }
.m10 { margin-top: 5px; }
.m10 .bubble { width: 443px; }
.m11 { margin-top: 21px; }
.m11 .bubble { width: 175px; }
.m12 { margin-top: 5px; }
.m12 .bubble { width: 244px; }

.composer { margin-top: 17px; display: flex; gap: 9px; padding-left: 9px; }
.field { width: 622px; height: 90px; display: flex; align-items: center; padding-left: 21px; border-radius: 45px; background: #20272b; }
.hint { width: 389px; margin-left: 22px; font-size: 34.800px; color: #8b9499; }
.cam { margin-left: 57px; }
.mic { width: 90px; height: 90px; display: grid; place-items: center; border-radius: 50%; background: #21c063; }

.nav { position: relative; height: 92px; background: #000; }
.keys { position: absolute; top: 0; left: 0; }
.credit { position: absolute; top: 58px; left: 37px; font: 15.050px/20px "Liberation Sans", Arial, sans-serif; color: #fff; white-space: nowrap; -webkit-text-stroke: .3px #fff; }
.watermark { position: absolute; top: 0; left: 0; z-index: 5; font: 43px "Liberation Sans", Arial, sans-serif; fill: #c8c8c8; stroke: #c8c8c8; stroke-width: .8; opacity: .4; filter: drop-shadow(1px 1px 1px rgba(0, 0, 0, .6)); }
```
